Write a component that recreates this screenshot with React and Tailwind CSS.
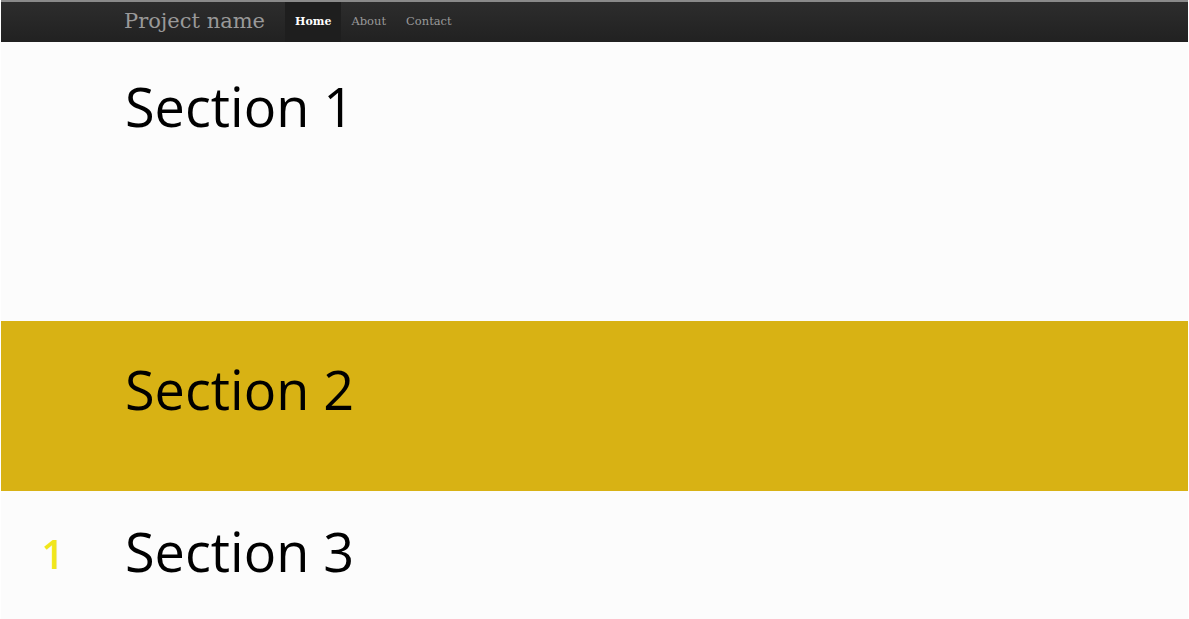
export default function App() {
  const heading = { fontFamily: '"Open Sans", "Noto Sans", sans-serif' };
  return (
    <div className="min-h-[619px] bg-white px-[1px]">
      <nav className="flex h-[42px] items-stretch border-t-2 border-[#8a8a8a] bg-gradient-to-b from-[#2d2d2d] to-[#212121] pl-[123px]" style={{ fontFamily: '"DejaVu Serif", serif' }}>
        <div className="flex items-center pr-[20px] text-[21px] text-[#999999]">Project name</div>
        <a className="flex items-center bg-[#1e1e1e] px-[10px] text-[11px] font-bold text-white">Home</a>
        <a className="flex items-center px-[10px] text-[11.5px] text-[#999999]">About</a>
        <a className="flex items-center px-[10px] text-[11.5px] text-[#999999]">Contact</a>
      </nav>
      <section className="h-[279px] bg-[#fcfcfc] pl-[124px] pt-[24px]">
        <h1 className="text-[54px] leading-[80px] text-black" style={heading}>Section 1</h1>
      </section>
      <section className="h-[170px] bg-[#d8b214] pl-[124px] pt-[28px]">
        <h1 className="text-[54px] leading-[80px] text-black" style={heading}>Section 2</h1>
      </section>
      <section className="flex h-[128px] items-start bg-[#fcfcfc] pt-[20px]">
        <div className="flex w-[124px] justify-center pl-[2px] pr-[22px] pt-[18px] text-[40px] font-semibold leading-[50px] text-[#f0e61c]" style={heading}>1</div>
        <h1 className="text-[54px] leading-[80px] text-black" style={heading}>Section 3</h1>
      </section>
    </div>
  );
}
